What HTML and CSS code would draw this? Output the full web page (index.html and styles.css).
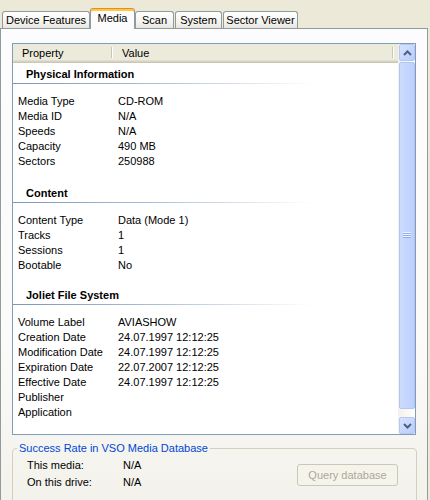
FILE: index.html
```html
<!DOCTYPE html>
<html>
<head>
<meta charset="utf-8">
<link rel="stylesheet" href="styles.css">
</head>
<body>
<div class="tabs">
  <div class="tab w-df">Device Features</div>
  <div class="tab tab-sel w-media">Media</div>
  <div class="tab w-scan">Scan</div>
  <div class="tab w-sys">System</div>
  <div class="tab w-sv">Sector Viewer</div>
</div>
<div class="panel">
  <div class="list">
    <div class="list-main">
      <div class="list-head">
        <div class="hcol hcol-prop">Property</div>
        <div class="hsep"></div>
        <div class="hcol hcol-val">Value</div>
        <div class="hsep"></div>
      </div>
      <div class="list-body">
        <div class="sec sec-1">
          <div class="sec-title">Physical Information</div>
          <div class="sec-line"></div>
          <div class="row"><span class="k">Media Type</span><span class="v">CD-ROM</span></div>
          <div class="row"><span class="k">Media ID</span><span class="v">N/A</span></div>
          <div class="row"><span class="k">Speeds</span><span class="v">N/A</span></div>
          <div class="row"><span class="k">Capacity</span><span class="v">490 MB</span></div>
          <div class="row"><span class="k">Sectors</span><span class="v">250988</span></div>
        </div>
        <div class="sec sec-2">
          <div class="sec-title">Content</div>
          <div class="sec-line"></div>
          <div class="row"><span class="k">Content Type</span><span class="v">Data (Mode 1)</span></div>
          <div class="row"><span class="k">Tracks</span><span class="v">1</span></div>
          <div class="row"><span class="k">Sessions</span><span class="v">1</span></div>
          <div class="row"><span class="k">Bootable</span><span class="v">No</span></div>
        </div>
        <div class="sec sec-3">
          <div class="sec-title">Joliet File System</div>
          <div class="sec-line"></div>
          <div class="row"><span class="k">Volume Label</span><span class="v">AVIASHOW</span></div>
          <div class="row"><span class="k">Creation Date</span><span class="v">24.07.1997 12:12:25</span></div>
          <div class="row"><span class="k">Modification Date</span><span class="v">24.07.1997 12:12:25</span></div>
          <div class="row"><span class="k">Expiration Date</span><span class="v">22.07.2007 12:12:25</span></div>
          <div class="row"><span class="k">Effective Date</span><span class="v">24.07.1997 12:12:25</span></div>
          <div class="row"><span class="k">Publisher</span><span class="v"></span></div>
          <div class="row"><span class="k">Application</span><span class="v"></span></div>
        </div>
      </div>
    </div>
    <div class="vscroll">
      <div class="sbtn">
        <svg width="9" height="6" viewBox="0 0 9 6"><path d="M1 5 L4.5 1.5 L8 5" fill="none" stroke="#4D6185" stroke-width="2"/></svg>
      </div>
      <div class="track">
        <div class="thumb">
          <svg width="8" height="7" viewBox="0 0 8 7">
            <rect x="0" y="0" width="8" height="1" fill="#EEF4FE"/>
            <rect x="0" y="1" width="8" height="1" fill="#8CB0F8"/>
            <rect x="0" y="2" width="8" height="1" fill="#EEF4FE"/>
            <rect x="0" y="3" width="8" height="1" fill="#8CB0F8"/>
            <rect x="0" y="4" width="8" height="1" fill="#EEF4FE"/>
            <rect x="0" y="5" width="8" height="1" fill="#8CB0F8"/>
          </svg>
        </div>
      </div>
      <div class="sbtn">
        <svg width="9" height="6" viewBox="0 0 9 6"><path d="M1 1 L4.5 4.5 L8 1" fill="none" stroke="#4D6185" stroke-width="2"/></svg>
      </div>
    </div>
  </div>
  <fieldset class="group">
    <legend class="group-title">Success Rate in VSO Media Database</legend>
    <div class="group-body">
      <div class="stats">
        <span>This media:</span><span>N/A</span>
        <span>On this drive:</span><span>N/A</span>
      </div>
      <button class="qbtn" disabled>Query database</button>
    </div>
  </fieldset>
</div>
</body>
</html>
```

FILE: styles.css
```css
body {
  margin: 0;
  width: 430px;
  height: 500px;
  overflow: hidden;
  background: #ECE9D8;
  font-family: "Liberation Sans", Arial, sans-serif;
  font-size: 11px;
  color: #000;
}

.tabs {
  display: flex;
  align-items: flex-end;
  height: 28px;
  padding-left: 2px;
  box-sizing: border-box;
}

.tab {
  box-sizing: border-box;
  height: 17px;
  border: 1px solid #919B9C;
  border-bottom: none;
  border-radius: 3px 3px 0 0;
  background: linear-gradient(#FFFFFF, #F5F4F0 60%, #E6E5DE);
  line-height: 16px;
  text-align: center;
  white-space: nowrap;
}

.tab-sel {
  height: 21px;
  margin-bottom: -1px;
  position: relative;
  z-index: 1;
  background: #FCFCFE;
  border-top: 1px solid #E68B2C;
  box-shadow: inset 0 2px 0 #FFC73C;
  padding-top: 1px;
  line-height: 16px;
}

.w-df { width: 88px; }
.w-media { width: 45px; }
.w-scan { width: 39px; margin-right: 1px; }
.w-sys { width: 47px; margin-right: 1px; }
.w-sv { width: 75px; }

.panel {
  box-sizing: border-box;
  width: 428px;
  height: 480px;
  border: 1px solid #919B9C;
  background: linear-gradient(#FCFCFE 0%, #FBFBF9 65%, #F2F1EB 100%);
  padding: 14px 0 0 11px;
}

.list {
  box-sizing: border-box;
  width: 404px;
  height: 392px;
  border: 1px solid #7F9DB9;
  background: #FFFFFF;
  display: flex;
}

.list-main {
  flex: 1;
  min-width: 0;
  display: flex;
  flex-direction: column;
}

.list-head {
  box-sizing: border-box;
  height: 19px;
  flex: none;
  display: flex;
  background: #EBEADB;
  border-bottom: 1px solid #CBC7B8;
  box-shadow: inset 0 -1px 0 #D6D2C2, inset 0 -2px 0 #E2DECD;
}

.hcol {
  box-sizing: border-box;
  line-height: 18px;
  white-space: nowrap;
}

.hcol-prop { width: 98px; padding-left: 9px; }
.hcol-val { width: 280px; padding-left: 10px; }

.hsep {
  width: 1px;
  margin: 3px 0 4px;
  background: #C7C5B2;
  box-shadow: 1px 0 0 #FFFFFF;
}

.list-body {
  flex: 1;
}

.sec-1 { margin-top: 3px; }
.sec-2 { margin-top: 16px; }
.sec-3 { margin-top: 14px; }

.sec-title {
  font-weight: bold;
  line-height: 16px;
  padding-left: 13px;
  padding-bottom: 1px;
}

.sec-line {
  height: 1px;
  margin-bottom: 10px;
  background: linear-gradient(90deg, #7B97B8 0%, #A9BCD2 35%, rgba(255,255,255,0) 78%);
}

.row {
  display: flex;
  line-height: 15px;
  padding-left: 5px;
  white-space: nowrap;
}

.k { width: 100px; flex: none; }

.vscroll {
  width: 17px;
  flex: none;
  display: flex;
  flex-direction: column;
  background: linear-gradient(90deg, #F3F1EC, #FEFEFB);
}

.sbtn {
  box-sizing: border-box;
  height: 17px;
  flex: none;
  margin-left: 1px;
  border: 1px solid #B4C8F6;
  border-radius: 2px;
  background: linear-gradient(135deg, #D7E2FE, #B9CDFB);
  display: flex;
  align-items: center;
  justify-content: center;
}

.track {
  flex: 1;
  display: flex;
  flex-direction: column;
  padding: 1px 0 8px 1px;
}

.thumb {
  flex: 1;
  box-sizing: border-box;
  border: 1px solid #B2C6F4;
  border-radius: 2px;
  background: linear-gradient(90deg, #CCDAFD, #BDD0FD);
  display: flex;
  align-items: center;
  justify-content: center;
}

.group {
  box-sizing: border-box;
  width: 405px;
  height: 62px;
  margin: 7px 0 0 0;
  border: 1px solid #D0D0BF;
  border-radius: 4px;
  padding: 0 0 0 4px;
  min-width: 0;
}

.group-title {
  color: #0046D5;
  padding: 0 2px;
  margin: 0;
  line-height: 13px;
}

.group-body {
  display: flex;
  align-items: flex-start;
  padding: 2px 18px 0 10px;
}

.stats {
  display: grid;
  grid-template-columns: 96px auto;
  line-height: 17px;
}

.qbtn {
  margin-left: auto;
  margin-top: 7px;
  box-sizing: border-box;
  width: 101px;
  height: 22px;
  border: 1px solid #C9C7BA;
  border-radius: 3px;
  background: #F5F4EA;
  color: #ACA899;
  font-family: "Liberation Sans", Arial, sans-serif;
  font-size: 11px;
  padding: 0;
}
```
